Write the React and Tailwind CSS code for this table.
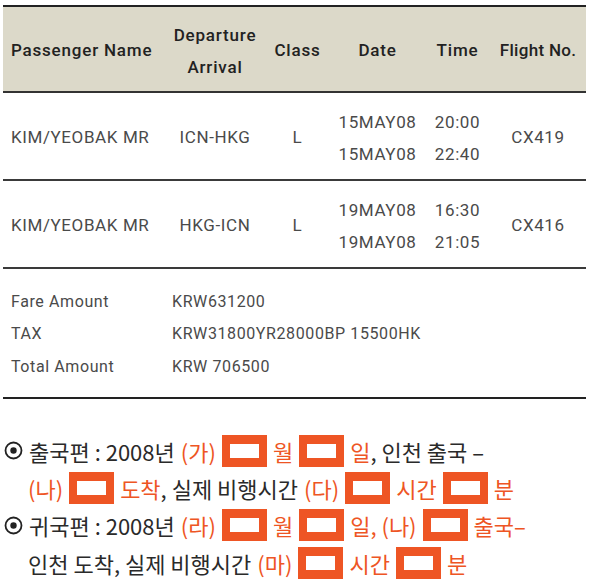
import React from 'react';

const cols = 'grid grid-cols-[162px_100px_65px_95px_65px_96px]';

const flights = [
  { name: 'KIM/YEOBAK MR', route: 'ICN-HKG', cls: 'L', dates: ['15MAY08', '15MAY08'], times: ['20:00', '22:40'], flight: 'CX419' },
  { name: 'KIM/YEOBAK MR', route: 'HKG-ICN', cls: 'L', dates: ['19MAY08', '19MAY08'], times: ['16:30', '21:05'], flight: 'CX416' },
];

function Blank() {
  return <span className="inline-block w-[45px] h-[32px] border-x-[8px] border-y-[9px] border-[#ee5524] bg-white shrink-0" />;
}

function Dot() {
  return (
    <svg width="19" height="19" viewBox="0 0 19 19" className="shrink-0">
      <circle cx="9.5" cy="9.5" r="8" fill="none" stroke="#222" strokeWidth="1.8" />
      <circle cx="9.5" cy="9.5" r="3.2" fill="#222" />
    </svg>
  );
}

const O = ({ children }) => <span className="text-[#ee5524]">{children}</span>;

export default function App() {
  return (
    <div className="w-[590px] h-[584px] bg-white overflow-hidden pt-[5px]" style={{ fontFamily: 'Roboto, "Noto Sans CJK KR", sans-serif' }}>
      <div className="ml-[3px] w-[583px] border-t-2 border-[#222]">
        <div className={`${cols} h-[86px] pt-[3px] bg-[#dcd9c9] border-b-2 border-[#333] items-center text-[17px] font-medium text-[#222] tracking-[0.8px]`}>
          <div className="pl-[8px]">Passenger Name</div>
          <div className="text-center leading-[32px]">Departure<br />Arrival</div>
          <div className="text-center">Class</div>
          <div className="text-center">Date</div>
          <div className="text-center">Time</div>
          <div className="text-center tracking-[0.3px]">Flight No.</div>
        </div>
        {flights.map((f, i) => (
          <div key={i} className={`${cols} h-[88px] pt-[3px] border-b-2 border-[#3a3a3a] items-center text-[17px] text-[#4a4a4a] tracking-[0.6px]`}>
            <div className="pl-[8px] whitespace-nowrap">{f.name}</div>
            <div className="text-center">{f.route}</div>
            <div className="text-center">{f.cls}</div>
            <div className="text-center leading-[32px]">{f.dates[0]}<br />{f.dates[1]}</div>
            <div className="text-center leading-[32px]">{f.times[0]}<br />{f.times[1]}</div>
            <div className="text-center">{f.flight}</div>
          </div>
        ))}
        <div className="h-[130px] pt-[3px] border-b-2 border-[#222] flex flex-col justify-center pl-[8px] text-[16px] text-[#4a4a4a] tracking-[0.6px] leading-[32.5px]">
          <div className="grid grid-cols-[161px_1fr]"><span>Fare Amount</span><span>KRW631200</span></div>
          <div className="grid grid-cols-[161px_1fr]"><span>TAX</span><span>KRW31800YR28000BP 15500HK</span></div>
          <div className="grid grid-cols-[161px_1fr]"><span>Total Amount</span><span>KRW 706500</span></div>
        </div>
      </div>

      <div className="mt-[33px] text-[22px] text-[#2a2a2a] leading-none" style={{ fontFamily: '"Noto Sans CJK KR", sans-serif' }}>
        <div className="flex items-center h-[37px] pl-[4px] gap-[6px] whitespace-nowrap">
          <Dot />
          <span>출국편 : 2008년</span>
          <O>(가)</O>
          <Blank />
          <O>월</O>
          <Blank />
          <span><O>일</O>, 인천 출국 –</span>
        </div>
        <div className="flex items-center h-[37px] pl-[28px] gap-[6px] whitespace-nowrap">
          <O>(나)</O>
          <Blank />
          <span><O>도착</O>, 실제 비행시간</span>
          <O>(다)</O>
          <Blank />
          <O>시간</O>
          <Blank />
          <O>분</O>
        </div>
        <div className="flex items-center h-[38px] pl-[4px] gap-[6px] whitespace-nowrap">
          <Dot />
          <span>귀국편 : 2008년</span>
          <O>(라)</O>
          <Blank />
          <O>월</O>
          <Blank />
          <O>일, (나)</O>
          <Blank />
          <O>출국–</O>
        </div>
        <div className="flex items-center h-[38px] pl-[28px] gap-[6px] whitespace-nowrap">
          <span>인천 도착, 실제 비행시간</span>
          <O>(마)</O>
          <Blank />
          <O>시간</O>
          <Blank />
          <O>분</O>
        </div>
      </div>
    </div>
  );
}
